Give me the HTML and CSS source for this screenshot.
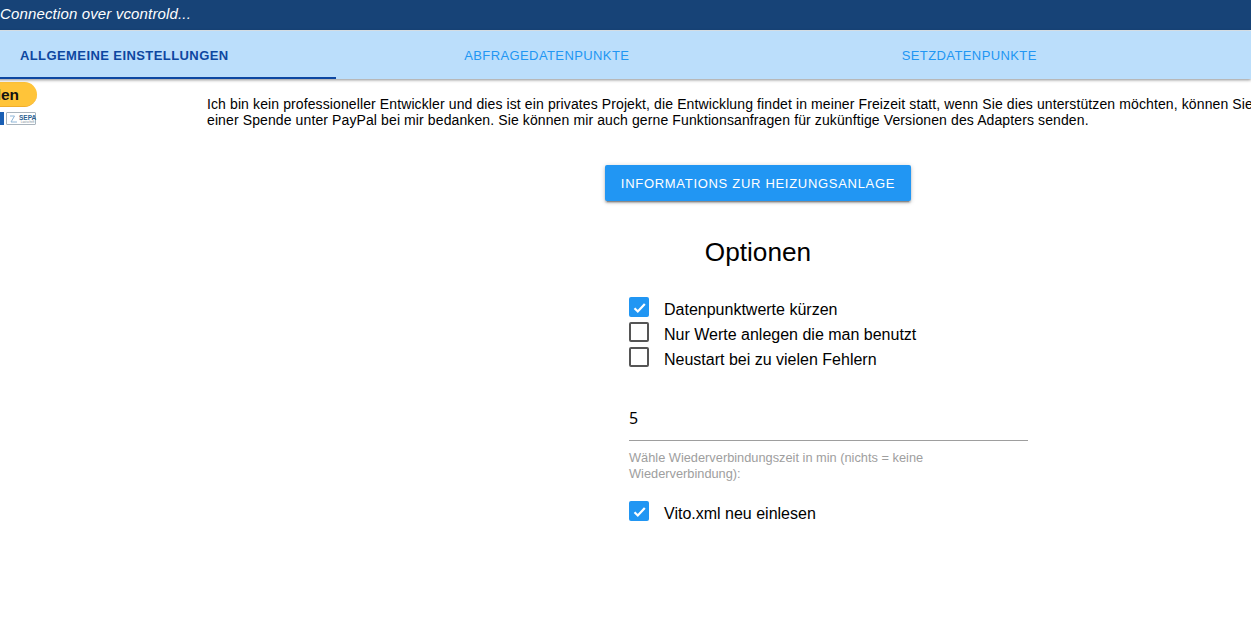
FILE: index.html
```html
<!DOCTYPE html>
<html lang="de">
<head>
  <meta charset="UTF-8">
  <title>vcontrol</title>
  <link rel="stylesheet" href="styles.css">
</head>
<body>
  <div class="topbar">Connection over vcontrold...</div>

  <div class="tabs">
    <div class="tab active">ALLGEMEINE EINSTELLUNGEN</div>
    <div class="tab">ABFRAGEDATENPUNKTE</div>
    <div class="tab">SETZDATENPUNKTE</div>
  </div>

  <div class="content">
    <div class="donate">
      <div class="paypal">Spenden</div>
      <div class="cards">
        <span class="card-blue"></span>
        <span class="card-sepa">
          <svg class="sepa-mark" width="9" height="9" viewBox="0 0 9 9"><path d="M1 2h4.5L2 8h6" fill="none" stroke="#8fb6d8" stroke-width="1"/></svg>
          <span class="sepa-words">
            <span class="sepa-text">SEPA</span>
            <span class="sepa-small">Lastschrift</span>
          </span>
        </span>
      </div>
    </div>

    <div class="main">
      <p class="intro">Ich bin kein professioneller Entwickler und dies ist ein privates Projekt, die Entwicklung findet in meiner Freizeit statt, wenn Sie dies unterstützen möchten, können Sie sich mit einer Spende unter PayPal bei mir bedanken. Sie können mir auch gerne Funktionsanfragen für zukünftige Versionen des Adapters senden.</p>

      <div class="center">
        <button class="btn" type="button">INFORMATIONS ZUR HEIZUNGSANLAGE</button>
        <h2 class="title">Optionen</h2>
      </div>

      <div class="fields">
        <div class="check-row">
          <span class="box checked">
            <svg width="20" height="20" viewBox="0 0 20 20"><path d="M5.5 11.2l3.3 3.3L15.8 7" fill="none" stroke="#fff" stroke-width="2.2"/></svg>
          </span>
          <span class="check-label">Datenpunktwerte kürzen</span>
        </div>
        <div class="check-row">
          <span class="box"></span>
          <span class="check-label">Nur Werte anlegen die man benutzt</span>
        </div>
        <div class="check-row">
          <span class="box"></span>
          <span class="check-label">Neustart bei zu vielen Fehlern</span>
        </div>

        <div class="input-value">5</div>
        <div class="helper">Wähle Wiederverbindungszeit in min (nichts = keine Wiederverbindung):</div>

        <div class="check-row">
          <span class="box checked">
            <svg width="20" height="20" viewBox="0 0 20 20"><path d="M5.5 11.2l3.3 3.3L15.8 7" fill="none" stroke="#fff" stroke-width="2.2"/></svg>
          </span>
          <span class="check-label">Vito.xml neu einlesen</span>
        </div>
      </div>
    </div>
  </div>
</body>
</html>
```

FILE: styles.css
```css
html, body {
  height: 100%;
  overflow: hidden;
}
body {
  margin: 0;
  background-color: #fff;
  color: #000;
  font-family: "Liberation Sans", Arial, sans-serif;
}
.topbar {
  height: 30px;
  line-height: 28px;
  background-color: #174377;
  border-bottom: 1px solid #e6eef5;
  color: #fff;
  font-size: 15px;
  font-style: italic;
  letter-spacing: 0.15px;
}
.tabs {
  display: flex;
  height: 48px;
  margin-left: -87px;
  width: 1338px;
  background-color: #bbdefb;
  box-shadow: 0 1px 3px rgba(0, 0, 0, 0.45);
  position: relative;
}
.tab {
  width: 422.5px;
  box-sizing: border-box;
  text-align: center;
  line-height: 49px;
  font-size: 13px;
  letter-spacing: 0.4px;
  color: #2196f3;
}
.tab.active {
  color: #0d47a1;
  font-weight: bold;
  letter-spacing: 0.42px;
  border-bottom: 2px solid #0d47a1;
}
.content {
  display: flex;
  margin-left: -87px;
}
.donate {
  width: 294px;
  flex: none;
  padding-top: 3px;
}
.paypal {
  width: 94px;
  height: 25px;
  margin-left: 30px;
  box-sizing: border-box;
  padding-right: 18px;
  border-radius: 13px;
  background-color: #ffc439;
  border-bottom: 1px solid #f0ad2c;
  color: #111;
  font-size: 15.5px;
  font-weight: bold;
  line-height: 26px;
  text-align: right;
}
.cards {
  display: flex;
  justify-content: flex-end;
  gap: 2px;
  width: 123px;
  margin-top: 5px;
}
.card-blue {
  width: 20px;
  height: 13px;
  background-color: #1a5fb4;
}
.card-sepa {
  display: flex;
  align-items: center;
  gap: 1px;
  width: 30px;
  height: 13px;
  box-sizing: border-box;
  padding-left: 2px;
  border: 1px solid #a9b4bd;
  border-radius: 1px;
}
.sepa-mark {
  flex: none;
}
.sepa-words {
  display: flex;
  flex-direction: column;
  align-items: center;
}
.sepa-text {
  color: #2b5f92;
  font-size: 6.5px;
  font-weight: bold;
  line-height: 7px;
}
.sepa-small {
  color: #7d8b97;
  font-size: 3px;
  line-height: 3px;
}
.main {
  width: 1102px;
  flex: none;
}
.intro {
  margin: 17px 0 0;
  font-size: 14px;
  letter-spacing: 0.11px;
  line-height: 16px;
}
.center {
  text-align: center;
}
.btn {
  display: inline-block;
  margin-top: 37px;
  width: 306px;
  height: 36px;
  padding: 0;
  border: none;
  border-radius: 2px;
  background-color: #2196f3;
  color: #fff;
  font-family: "Liberation Sans", Arial, sans-serif;
  font-size: 13px;
  letter-spacing: 0.7px;
  box-shadow: 0 2px 2px rgba(0, 0, 0, 0.2), 0 3px 1px -2px rgba(0, 0, 0, 0.25), 0 1px 5px rgba(0, 0, 0, 0.2);
}
.title {
  margin: 32px 0 0;
  font-size: 26.2px;
  font-weight: normal;
  line-height: 38px;
}
.fields {
  width: 399px;
  margin: 26px 0 0 422px;
}
.check-row {
  display: flex;
  height: 25px;
}
.box {
  width: 20px;
  height: 20px;
  box-sizing: border-box;
  border: 2px solid #555;
  border-radius: 2px;
  flex: none;
}
.box.checked {
  border: none;
  background-color: #2196f3;
}
.box svg {
  display: block;
}
.check-label {
  margin-left: 15px;
  font-size: 16px;
  line-height: 26px;
}
.input-value {
  height: 34px;
  margin-top: 34px;
  border-bottom: 1px solid #9e9e9e;
  font-family: "Noto Sans", sans-serif;
  font-size: 16px;
  line-height: 24px;
}
.helper {
  margin-top: 9px;
  margin-bottom: 19px;
  color: #9e9e9e;
  font-size: 12.8px;
  line-height: 16px;
}
```
